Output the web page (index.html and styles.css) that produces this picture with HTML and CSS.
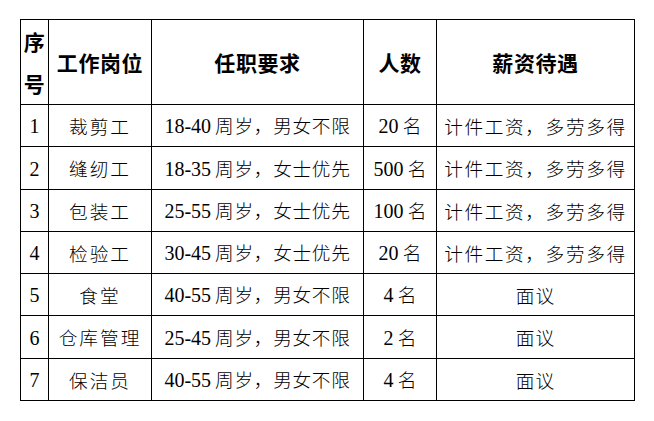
FILE: index.html
```html
<!DOCTYPE html>
<html lang="zh-CN">
<head>
<meta charset="utf-8">
<title>招聘岗位</title>
<link rel="stylesheet" href="styles.css">
</head>
<body>
<table class="jobs">
  <colgroup>
    <col class="c1"><col class="c2"><col class="c3"><col class="c4"><col class="c5">
  </colgroup>
  <thead>
    <tr class="head">
      <th class="seq">序<br>号</th>
      <th>工作岗位</th>
      <th>任职要求</th>
      <th>人数</th>
      <th>薪资待遇</th>
    </tr>
  </thead>
  <tbody>
    <tr class="r42">
      <td><span class="n">1</span></td>
      <td class="pos">裁剪工</td>
      <td class="req"><span class="n nr">18-40</span>周岁，男女不限</td>
      <td><span class="n">20</span> 名</td>
      <td class="pay">计件工资，多劳多得</td>
    </tr>
    <tr class="r43">
      <td><span class="n">2</span></td>
      <td class="pos">缝纫工</td>
      <td class="req"><span class="n nr">18-35</span>周岁，女士优先</td>
      <td><span class="n">500</span> 名</td>
      <td class="pay">计件工资，多劳多得</td>
    </tr>
    <tr class="r42">
      <td><span class="n">3</span></td>
      <td class="pos">包装工</td>
      <td class="req"><span class="n nr">25-55</span>周岁，女士优先</td>
      <td><span class="n">100</span> 名</td>
      <td class="pay">计件工资，多劳多得</td>
    </tr>
    <tr class="r42">
      <td><span class="n">4</span></td>
      <td class="pos">检验工</td>
      <td class="req"><span class="n nr">30-45</span>周岁，女士优先</td>
      <td><span class="n">20</span> 名</td>
      <td class="pay">计件工资，多劳多得</td>
    </tr>
    <tr class="r42">
      <td><span class="n">5</span></td>
      <td class="pos">食堂</td>
      <td class="req"><span class="n nr">40-55</span>周岁，男女不限</td>
      <td><span class="n">4</span> 名</td>
      <td class="talk">面议</td>
    </tr>
    <tr class="r43">
      <td><span class="n">6</span></td>
      <td class="pos">仓库管理</td>
      <td class="req"><span class="n nr">25-45</span>周岁，男女不限</td>
      <td><span class="n">2</span> 名</td>
      <td class="talk">面议</td>
    </tr>
    <tr class="r42">
      <td><span class="n">7</span></td>
      <td class="pos">保洁员</td>
      <td class="req"><span class="n nr">40-55</span>周岁，男女不限</td>
      <td><span class="n">4</span> 名</td>
      <td class="talk">面议</td>
    </tr>
  </tbody>
</table>
</body>
</html>
```

FILE: styles.css
```css
html, body {
  margin: 0;
  padding: 0;
  background: #ffffff;
}

body {
  font-family: "Liberation Serif", "Noto Sans CJK SC", serif;
  color: #000000;
}

.jobs {
  margin: 19px 0 0 20px;
  border-collapse: collapse;
  table-layout: fixed;
  width: 615px;
}

.c1 { width: 28px; }
.c2 { width: 103px; }
.c3 { width: 212px; }
.c4 { width: 73px; }
.c5 { width: 198px; }

.jobs th,
.jobs td {
  border: 1px solid #000000;
  padding: 0;
  text-align: center;
  vertical-align: middle;
  white-space: nowrap;
}

.jobs th {
  font-family: "Noto Sans CJK SC", sans-serif;
  font-size: 21px;
  font-weight: 700;
  line-height: 42px;
  letter-spacing: 0.6px;
}

.head { height: 84px; }
.r42 { height: 42px; }
.r43 { height: 43px; }

.jobs td {
  font-family: "Noto Sans CJK SC", sans-serif;
  font-size: 18.67px;
  font-weight: 300;
  line-height: 24px;
}

.n {
  font-family: "Liberation Serif", serif;
  font-size: 20px;
  font-weight: 400;
  letter-spacing: 0;
}

.nr { margin-right: 4px; }

.pos {
  letter-spacing: 2px;
  padding-left: 2px;
}

.req {
  letter-spacing: 0.7px;
}

.pay {
  letter-spacing: 1.6px;
  padding-left: 2px;
}

.talk {
  letter-spacing: 1px;
}
```
